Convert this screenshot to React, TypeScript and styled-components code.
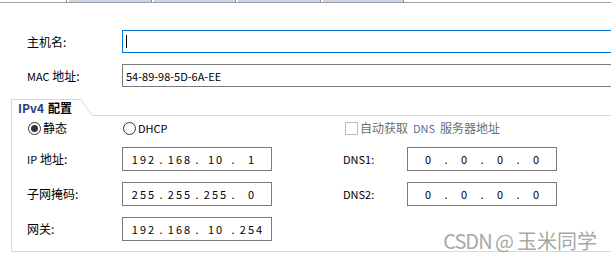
import React from 'react';
import styled, { createGlobalStyle } from 'styled-components';

const GlobalStyle = createGlobalStyle`
  body {
    margin: 0;
    background: #ffffff;
    font-family: "Noto Sans CJK SC", "Liberation Sans", sans-serif;
    font-size: 12px;
    color: #000000;
  }
`;

const Page = styled.div`
  position: relative;
  width: 611px;
  height: 259px;
  overflow: hidden;
  background: #ffffff;
`;

const Strip = styled.div`
  display: flex;
  height: 2px;
  border-bottom: 1px solid #a0a0a0;
`;

const Stub = styled.div<{ $w: number; $blue?: boolean }>`
  width: ${(p) => p.$w}px;
  flex: none;
  background: ${(p) => (p.$blue ? '#c9d7ea' : '#ffffff')};
  border-right: 1px solid #8e8e8e;
  margin-right: 2px;
`;

const Main = styled.div`
  padding-top: 27px;
`;

const Row = styled.div`
  display: grid;
  grid-template-columns: 95px 1fr;
  align-items: center;
  padding-left: 27px;
  & + & {
    margin-top: 11px;
  }
`;

const Label = styled.span`
  line-height: 16px;
  white-space: nowrap;
`;

const Latin = styled.span`
  font-size: 11px;
`;

const TextBox = styled.div<{ $focused?: boolean }>`
  box-sizing: border-box;
  width: 520px;
  height: 23px;
  border: 1px solid ${(p) => (p.$focused ? '#0078d7' : '#7a7a7a')};
  display: flex;
  align-items: center;
  padding-left: 3px;
  font-size: 11px;
  line-height: 16px;
`;

const Caret = styled.span`
  width: 1px;
  height: 13px;
  background: #000000;
`;

const Group = styled.section`
  margin: 12px 0 0 11px;
`;

const GroupHead = styled.div`
  display: flex;
  height: 17px;
`;

const TabLabel = styled.div`
  box-sizing: border-box;
  width: 70px;
  border-top: 1px solid #d9d9d9;
  border-left: 1px solid #d9d9d9;
  padding: 1px 0 0 6px;
  line-height: 14px;
  font-weight: 700;
  white-space: nowrap;
`;

const TabAccent = styled.span`
  color: #23427f;
  margin-right: 4px;
`;

const HeadFill = styled.div`
  flex: 1;
  border-bottom: 1px solid #d9d9d9;
`;

const GroupBody = styled.div`
  display: grid;
  grid-template-columns: 95px 150px 71px 64px 150px;
  grid-template-rows: 16px 24px 24px 24px;
  row-gap: 11px;
  align-items: center;
  padding: 4px 0 10px 15px;
  border-left: 1px solid #d9d9d9;
  border-bottom: 1px solid #d9d9d9;
`;

const Choice = styled.label<{ $disabled?: boolean; $span?: number }>`
  display: flex;
  align-items: center;
  gap: 2px;
  white-space: nowrap;
  line-height: 16px;
  color: ${(p) => (p.$disabled ? '#6d6d6d' : '#000000')};
  grid-column: ${(p) => (p.$span ? `span ${p.$span}` : 'auto')};
`;

const RadioDot = styled.span<{ $checked?: boolean }>`
  box-sizing: border-box;
  width: 13px;
  height: 13px;
  margin-left: 1px;
  border: 1px solid #333333;
  border-radius: 50%;
  display: inline-flex;
  align-items: center;
  justify-content: center;
  &::after {
    content: '';
    width: 7px;
    height: 7px;
    border-radius: 50%;
    background: #333333;
    display: ${(p) => (p.$checked ? 'block' : 'none')};
  }
`;

const CheckBox = styled.span`
  box-sizing: border-box;
  width: 13px;
  height: 13px;
  margin-left: 2px;
  border: 1px solid #bcbcbc;
  background: #ffffff;
`;

const Accent = styled.span`
  color: #5a6fa0;
  font-size: 11px;
  margin: 0 3px;
`;

const IpBox = styled.div`
  box-sizing: border-box;
  height: 24px;
  border: 1px solid #7a7a7a;
  display: flex;
  justify-content: center;
  align-items: center;
  font-size: 11px;
  line-height: 16px;
`;

const Octet = styled.span`
  width: 27px;
  text-align: center;
  letter-spacing: 2px;
  text-indent: 2px;
`;

const Dot = styled.span`
  width: 9px;
  text-align: center;
`;

const Watermark = styled.div`
  position: absolute;
  right: 14px;
  bottom: 8px;
  font-size: 20px;
  line-height: 20px;
  color: #a8a8a8;
  white-space: nowrap;
`;

const WatermarkLatin = styled.span`
  letter-spacing: -1px;
  margin-right: 4px;
`;

function IpField({ value }: { value: string }) {
  const parts = value.split('.');
  return (
    <IpBox>
      {parts.map((part, i) => (
        <React.Fragment key={i}>
          {i > 0 && <Dot>.</Dot>}
          <Octet>{part}</Octet>
        </React.Fragment>
      ))}
    </IpBox>
  );
}

export default function App() {
  return (
    <Page>
      <GlobalStyle />
      <Strip>
        <Stub $w={66} />
        <Stub $w={82} $blue />
        <Stub $w={81} $blue />
        <Stub $w={82} $blue />
        <Stub $w={80} $blue />
      </Strip>

      <Main>
        <Row>
          <Label>主机名:</Label>
          <TextBox $focused>
            <Caret />
          </TextBox>
        </Row>
        <Row>
          <Label>
            <Latin>MAC</Latin> 地址:
          </Label>
          <TextBox>54-89-98-5D-6A-EE</TextBox>
        </Row>

        <Group>
          <GroupHead>
            <TabLabel>
              <TabAccent>IPv4</TabAccent>配置
            </TabLabel>
            <svg width="11" height="17" viewBox="0 0 11 17">
              <line x1="0" y1="0.5" x2="11" y2="16.5" stroke="#d9d9d9" strokeWidth="1" />
            </svg>
            <HeadFill />
          </GroupHead>
          <GroupBody>
            <Choice>
              <RadioDot $checked />
              静态
            </Choice>
            <Choice>
              <RadioDot />
              <Latin>DHCP</Latin>
            </Choice>
            <span />
            <Choice $disabled $span={2}>
              <CheckBox />
              自动获取<Accent>DNS</Accent>服务器地址
            </Choice>

            <Label>
              <Latin>IP</Latin> 地址:
            </Label>
            <IpField value="192.168.10.1" />
            <span />
            <Label>
              <Latin>DNS1:</Latin>
            </Label>
            <IpField value="0.0.0.0" />

            <Label>子网掩码:</Label>
            <IpField value="255.255.255.0" />
            <span />
            <Label>
              <Latin>DNS2:</Latin>
            </Label>
            <IpField value="0.0.0.0" />

            <Label>网关:</Label>
            <IpField value="192.168.10.254" />
          </GroupBody>
        </Group>
      </Main>

      <Watermark>
        <WatermarkLatin>CSDN @</WatermarkLatin>玉米同学
      </Watermark>
    </Page>
  );
}
